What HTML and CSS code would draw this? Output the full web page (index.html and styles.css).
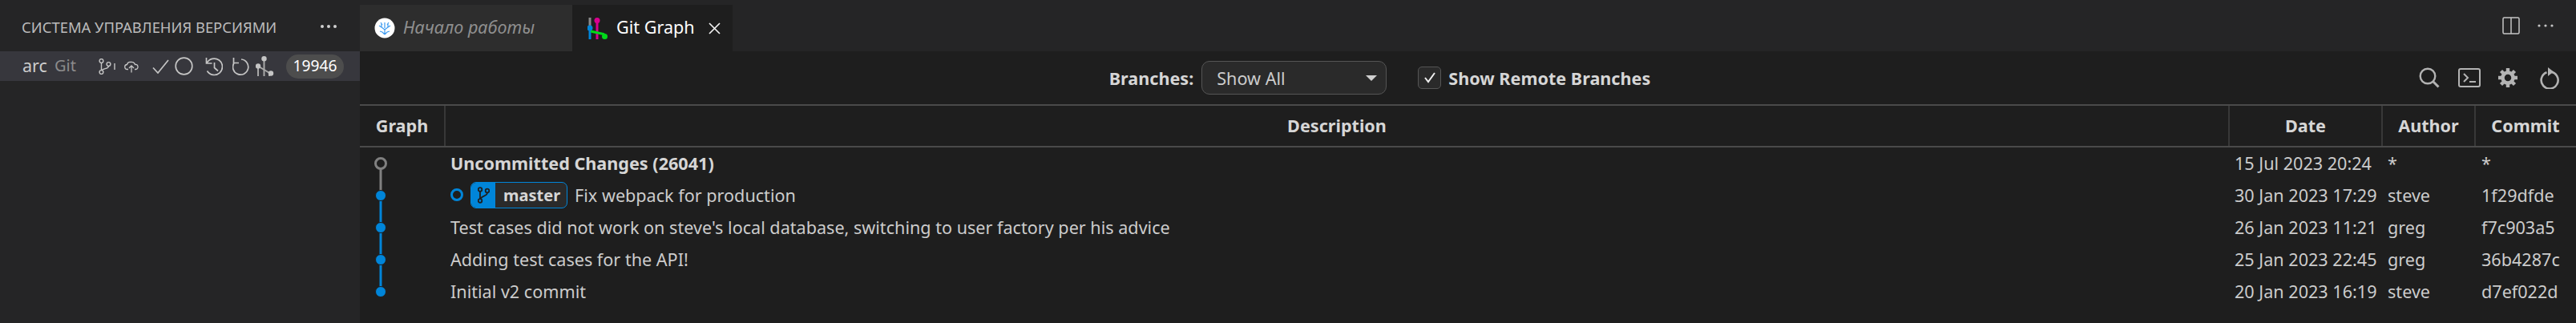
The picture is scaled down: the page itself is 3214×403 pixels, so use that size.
FILE: index.html
```html
<!DOCTYPE html>
<html lang="ru">
<head>
<meta charset="utf-8">
<title>Git Graph</title>
<link rel="stylesheet" href="styles.css">
</head>
<body>
<div class="app">
  <aside class="sidebar">
    <div class="side-head">
      <span class="side-title">СИСТЕМА УПРАВЛЕНИЯ ВЕРСИЯМИ</span>
      <svg class="side-dots" width="22" height="6" viewBox="0 0 22 6"><circle cx="3" cy="3" r="2"/><circle cx="11" cy="3" r="2"/><circle cx="19" cy="3" r="2"/></svg>
    </div>
    <div class="repo-row">
      <span class="repo-name">arc</span>
      <span class="repo-type">Git</span>
      <svg class="ic-branch" width="21" height="20" viewBox="0 0 21 20"><g fill="none" stroke="#c5c5c5" stroke-width="1.400"><circle cx="3.500" cy="3" r="2.400"/><circle cx="3.500" cy="17" r="2.400"/><circle cx="12.500" cy="7" r="2.400"/><path d="M3.500 5.400v9.200M12.500 9.400c0 3.600-6.500 2.600-8.500 5.300"/></g><path d="M20 6v8" stroke="#c5c5c5" stroke-width="1.400"/></svg>
      <svg class="ic-cloud" width="18" height="16" viewBox="0 0 18 16"><path d="M5 11.500H4A3 3 0 0 1 3.500 5.500 4 4 0 0 1 8 2.500 4.500 4.500 0 0 1 13.500 5.500 3 3 0 0 1 14.500 11.500H13M9 15.500V7M6 10 9 7 12 10" fill="none" stroke="#c5c5c5" stroke-width="1.300"/></svg>
      <svg class="ic-check" width="21" height="18" viewBox="0 0 21 18"><path d="M1 10.500 7 17 20 1" fill="none" stroke="#c5c5c5" stroke-width="1.700"/></svg>
      <svg class="ic-circle" width="23" height="23" viewBox="0 0 23 23"><circle cx="11.500" cy="11.500" r="10.300" fill="none" stroke="#c5c5c5" stroke-width="1.700"/></svg>
      <svg class="ic-history" width="22" height="24" viewBox="0 0 22 24"><path d="M1.500 1v7h7M2 8A10.200 10.200 0 1 1 2.500 17.500" fill="none" stroke="#c5c5c5" stroke-width="1.700"/><path d="M11.500 7v6.500l4.500 4" fill="none" stroke="#c5c5c5" stroke-width="1.700"/></svg>
      <svg class="ic-refresh" width="21" height="24" viewBox="0 0 21 24"><path d="M1.500 1v6.500H8M11 3A9.600 9.600 0 1 1 2 7.500" fill="none" stroke="#c5c5c5" stroke-width="1.700"/></svg>
      <svg class="ic-graph" width="23" height="25" viewBox="0 0 23 25"><g stroke="#a8a8a8" stroke-width="2" fill="none"><path d="M3 15v10M10.500 5v20M17 20v5"/><path d="M3 12.500l15 9"/></g><circle cx="3" cy="12.500" r="3.200" fill="#c5c5c5"/><circle cx="10.500" cy="3.300" r="3.200" fill="#c5c5c5"/><circle cx="19" cy="21.500" r="3.200" fill="#c5c5c5"/></svg>
      <span class="count">19946</span>
    </div>
  </aside>
  <main class="editor">
    <div class="tabbar">
      <div class="tab tab-welcome">
        <svg class="coral" width="26" height="26" viewBox="0 0 26 26"><circle cx="13" cy="13" r="12.500" fill="#fff"/><path d="M13 21v-7M13 15l-4-3V8M13 15l4-3V7M9 12 6 10M17 12l3-2M13 13V6M10 9 8 6M16 9l2-3M13 21l-3-3-3-1M13 21l3-3 3-1" fill="none" stroke="#3d9bf0" stroke-width="1.200"/></svg>
        <span class="tab-label-it">Начало работы</span>
      </div>
      <div class="tab tab-graph">
        <svg class="gg" width="25" height="27" viewBox="0 0 25 27"><path d="M3 0v10" stroke="#8a8a8a" stroke-width="3"/><path d="M3 14v13" stroke="#0085d9" stroke-width="3"/><circle cx="3" cy="13" r="3.500" fill="#0085d9"/><path d="M12 4v23" stroke="#d9008f" stroke-width="3"/><circle cx="12" cy="3.500" r="3.500" fill="#d9008f"/><path d="M4 17l17 3.800" stroke="#00d91a" stroke-width="3"/><circle cx="21.500" cy="23.500" r="3.500" fill="#00d91a"/></svg>
        <span class="tab-label">Git Graph</span>
        <svg class="tab-close" width="15" height="15" viewBox="0 0 15 15"><path d="M1 1l13 13M14 1 1 14" stroke="#f0f0f0" stroke-width="1.700" fill="none"/></svg>
      </div>
      <div class="tab-actions">
        <svg class="act-split" width="22" height="22" viewBox="0 0 22 22"><rect x="1" y="1" width="20" height="20" rx="1.500" fill="none" stroke="#c5c5c5" stroke-width="1.500"/><path d="M11 1v20" stroke="#c5c5c5" stroke-width="1.500"/></svg>
        <svg class="act-dots" width="20" height="6" viewBox="0 0 20 6"><circle cx="2" cy="3" r="1.600"/><circle cx="10" cy="3" r="1.600"/><circle cx="18" cy="3" r="1.600"/></svg>
      </div>
    </div>
    <div class="toolbar">
      <div class="filters">
        <span class="tool-label">Branches:</span>
        <div class="select"><span>Show All</span><i class="caret"></i></div>
        <div class="checkbox"><svg width="18" height="16" viewBox="0 0 18 16"><path d="M3 8l4 5 8-11" fill="none" stroke="#f0f0f0" stroke-width="2"/></svg></div>
        <span class="tool-label">Show Remote Branches</span>
      </div>
      <div class="tools">
        <svg class="t-search" width="26" height="26" viewBox="0 0 26 26"><circle cx="11" cy="11" r="9.300" fill="none" stroke="#b3b3b3" stroke-width="2.400"/><path d="M17.500 17.500l7 7" stroke="#b3b3b3" stroke-width="3"/></svg>
        <svg class="t-term" width="28" height="24" viewBox="0 0 28 24"><rect x="1" y="1" width="26" height="22" rx="2" fill="none" stroke="#b3b3b3" stroke-width="2"/><path d="M7 7l5 5-5 5" fill="none" stroke="#b3b3b3" stroke-width="2"/><path d="M14 17h8" stroke="#b3b3b3" stroke-width="2"/></svg>
        <svg class="t-gear" width="24" height="24" viewBox="0 0 24 24"><circle cx="12" cy="12" r="6.500" fill="none" stroke="#b3b3b3" stroke-width="4.500"/><g stroke="#b3b3b3" stroke-width="4.400"><path d="M12 0v5M12 19v5M0 12h5M19 12h5M3.500 3.500l3.500 3.500M17 17l3.500 3.500M20.500 3.500 17 7M7 17l-3.500 3.500"/></g></svg>
        <svg class="t-refresh" width="24" height="27" viewBox="0 0 24 27"><path d="M8.500 6.200A10.500 10.500 0 1 0 13 5.600" fill="none" stroke="#b3b3b3" stroke-width="2.600"/><path d="M10 0l7 5.500-7 5.500z" fill="#b3b3b3"/></svg>
      </div>
    </div>
    <div class="table">
      <div class="row head">
        <div class="c-graph">Graph</div>
        <div class="c-desc">Description</div>
        <div class="c-date">Date</div>
        <div class="c-author">Author</div>
        <div class="c-commit">Commit</div>
      </div>
      <div class="row"><div class="c-graph"></div><div class="c-desc strong">Uncommitted Changes (26041)</div><div class="c-date">15 Jul 2023 20:24</div><div class="c-author">*</div><div class="c-commit">*</div></div>
      <div class="row"><div class="c-graph"></div><div class="c-desc"><i class="head-dot"></i><span class="ref"><span class="ref-ic"><svg width="15" height="21" viewBox="0 0 15 21"><g fill="none" stroke="#1e1e1e" stroke-width="1.800"><circle cx="3" cy="3.500" r="2.300"/><circle cx="3" cy="17.500" r="2.300"/><circle cx="12" cy="5" r="2.300"/><path d="M3 5.800v9.400M12 7.300c0 5-7.500 3.500-8.500 8"/></g></svg></span><span class="ref-name">master</span></span><span>Fix webpack for production</span></div><div class="c-date">30 Jan 2023 17:29</div><div class="c-author">steve</div><div class="c-commit">1f29dfde</div></div>
      <div class="row"><div class="c-graph"></div><div class="c-desc">Test cases did not work on steve's local database, switching to user factory per his advice</div><div class="c-date">26 Jan 2023 11:21</div><div class="c-author">greg</div><div class="c-commit">f7c903a5</div></div>
      <div class="row"><div class="c-graph"></div><div class="c-desc">Adding test cases for the API!</div><div class="c-date">25 Jan 2023 22:45</div><div class="c-author">greg</div><div class="c-commit">36b4287c</div></div>
      <div class="row"><div class="c-graph"></div><div class="c-desc">Initial v2 commit</div><div class="c-date">20 Jan 2023 16:19</div><div class="c-author">steve</div><div class="c-commit">d7ef022d</div></div>
      <svg class="graph" width="60" height="200" viewBox="0 0 60 200">
        <path d="M26 20v40" stroke="#808080" stroke-width="3"/>
        <path d="M26 60v120" stroke="#0085d9" stroke-width="3"/>
        <circle cx="26" cy="20" r="6.500" fill="#1e1e1e" stroke="#808080" stroke-width="3"/>
        <circle class="node" cx="26" cy="60" r="6.500"/>
        <circle class="node" cx="26" cy="100" r="6.500"/>
        <circle class="node" cx="26" cy="140" r="6.500"/>
        <circle class="node" cx="26" cy="180" r="6.500"/>
      </svg>
    </div>
  </main>
</div>
</body>
</html>
```
FILE: styles.css
```css
* { box-sizing: border-box; }
html, body { margin: 0; height: 100%; }
body { background: #1e1e1e; color: #cccccc; font-family: "Noto Sans", sans-serif; overflow: hidden; }
svg { display: block; flex: none; }

.app { display: flex; width: 3214px; height: 403px; }

.sidebar { width: 449px; flex: none; background: #252526; }
.side-head { height: 64px; display: flex; align-items: center; padding: 2px 28px 0 27px; justify-content: space-between; }
.side-title { font-size: 18.4px; color: #bbbbbb; white-space: nowrap; }
.side-dots { fill: #d0d0d0; }
.repo-row { height: 37px; background: #37373d; display: flex; align-items: center; padding-left: 28px; }
.repo-name { font-size: 21.6px; color: #cccccc; width: 40px; padding-bottom: 3px; }
.repo-type { font-size: 20px; color: #8c8c8c; width: 55px; padding-bottom: 3px; }
.ic-cloud { margin-left: 11px; }
.ic-check { margin-left: 17px; }
.ic-circle { margin-left: 7px; }
.ic-history { margin-left: 15px; }
.ic-refresh { margin-left: 12px; }
.ic-graph { margin-left: 8px; }
.count { margin-left: 15px; height: 30px; width: 72px; padding-bottom: 2px; border-radius: 15px; background: #4d4d4d; color: #ffffff; font-size: 19.2px; display: flex; align-items: center; justify-content: center; }

.editor { flex: 1; min-width: 0; }
.tabbar { height: 64px; background: #252526; display: flex; align-items: flex-end; }
.tab { height: 58px; display: flex; align-items: center; }
.tab-welcome { width: 265px; background: #2d2d2d; padding-left: 18px; gap: 10px; }
.tab-label-it { font-size: 21.6px; font-style: italic; color: #8f8f8f; padding-bottom: 4px; }
.tab-graph { width: 200px; background: #1e1e1e; padding-left: 19px; }
.tab-label { font-size: 21.6px; color: #ffffff; margin-left: 11px; padding-bottom: 4px; }
.tab-close { margin-left: 17px; }
.tab-actions { margin-left: auto; height: 64px; display: flex; align-items: center; gap: 22px; padding-right: 28px; }
.act-dots { fill: #c5c5c5; }

.toolbar { height: 66px; display: flex; align-items: center; }
.filters { flex: 1; display: flex; align-items: center; justify-content: center; padding-right: 24px; }
.tool-label { font-size: 21.6px; font-weight: 700; color: #d6d6d6; }
.select { width: 231px; height: 42px; margin-left: 10px; border: 1.500px solid #555555; border-radius: 10px; background: #2a2a2a; display: flex; align-items: center; justify-content: space-between; padding: 0 11px 0 18px; font-size: 21.6px; color: #cccccc; }
.caret { width: 0; height: 0; border-left: 7px solid transparent; border-right: 7px solid transparent; border-top: 7px solid #d0d0d0; }
.checkbox { width: 29px; height: 28px; margin-left: 39px; margin-right: 9px; border: 1.500px solid #555555; border-radius: 5px; background: #2a2a2a; display: flex; align-items: center; justify-content: center; }
.tools { display: flex; align-items: center; padding-right: 21px; }
.t-term { margin-left: 23px; }
.t-gear { margin-left: 22px; }
.t-refresh { margin-left: 28px; }

.table { position: relative; border-top: 2px solid #4a4a4a; }
.row { height: 40px; display: grid; grid-template-columns: 107px 2226px 191px 116px 124px; align-items: center; font-size: 21.6px; color: #cccccc; white-space: nowrap; }
.row > div { padding: 0 0 2px 6px; height: 100%; display: flex; align-items: center; }
.row .c-commit { padding-left: 7px; }
.row.head { height: 52px; font-weight: 700; color: #d6d6d6; border-bottom: 2px solid #4a4a4a; }
.row.head > div { padding-left: 0; justify-content: center; border-right: 2px solid #383838; }
.row.head > div:last-child { border-right: 0; }
.strong { font-weight: 700; color: #d6d6d6; }

.head-dot { width: 16px; height: 16px; border: 3.500px solid #0085d9; border-radius: 50%; margin-right: 9px; flex: none; }
.ref { display: flex; height: 33px; border: 1.500px solid #0085d9; border-radius: 7px; overflow: hidden; background: #2a2a2a; margin-right: 9px; align-items: stretch; }
.ref-ic { width: 30px; background: #0085d9; display: flex; align-items: center; justify-content: center; }
.ref-name { font-weight: 700; font-size: 20px; color: #d6d6d6; padding: 0 8px 0 10px; display: flex; align-items: center; }

.graph { position: absolute; left: 0; top: 52px; }
.node { fill: #0085d9; stroke: #1e1e1e; stroke-width: 1; }
```
